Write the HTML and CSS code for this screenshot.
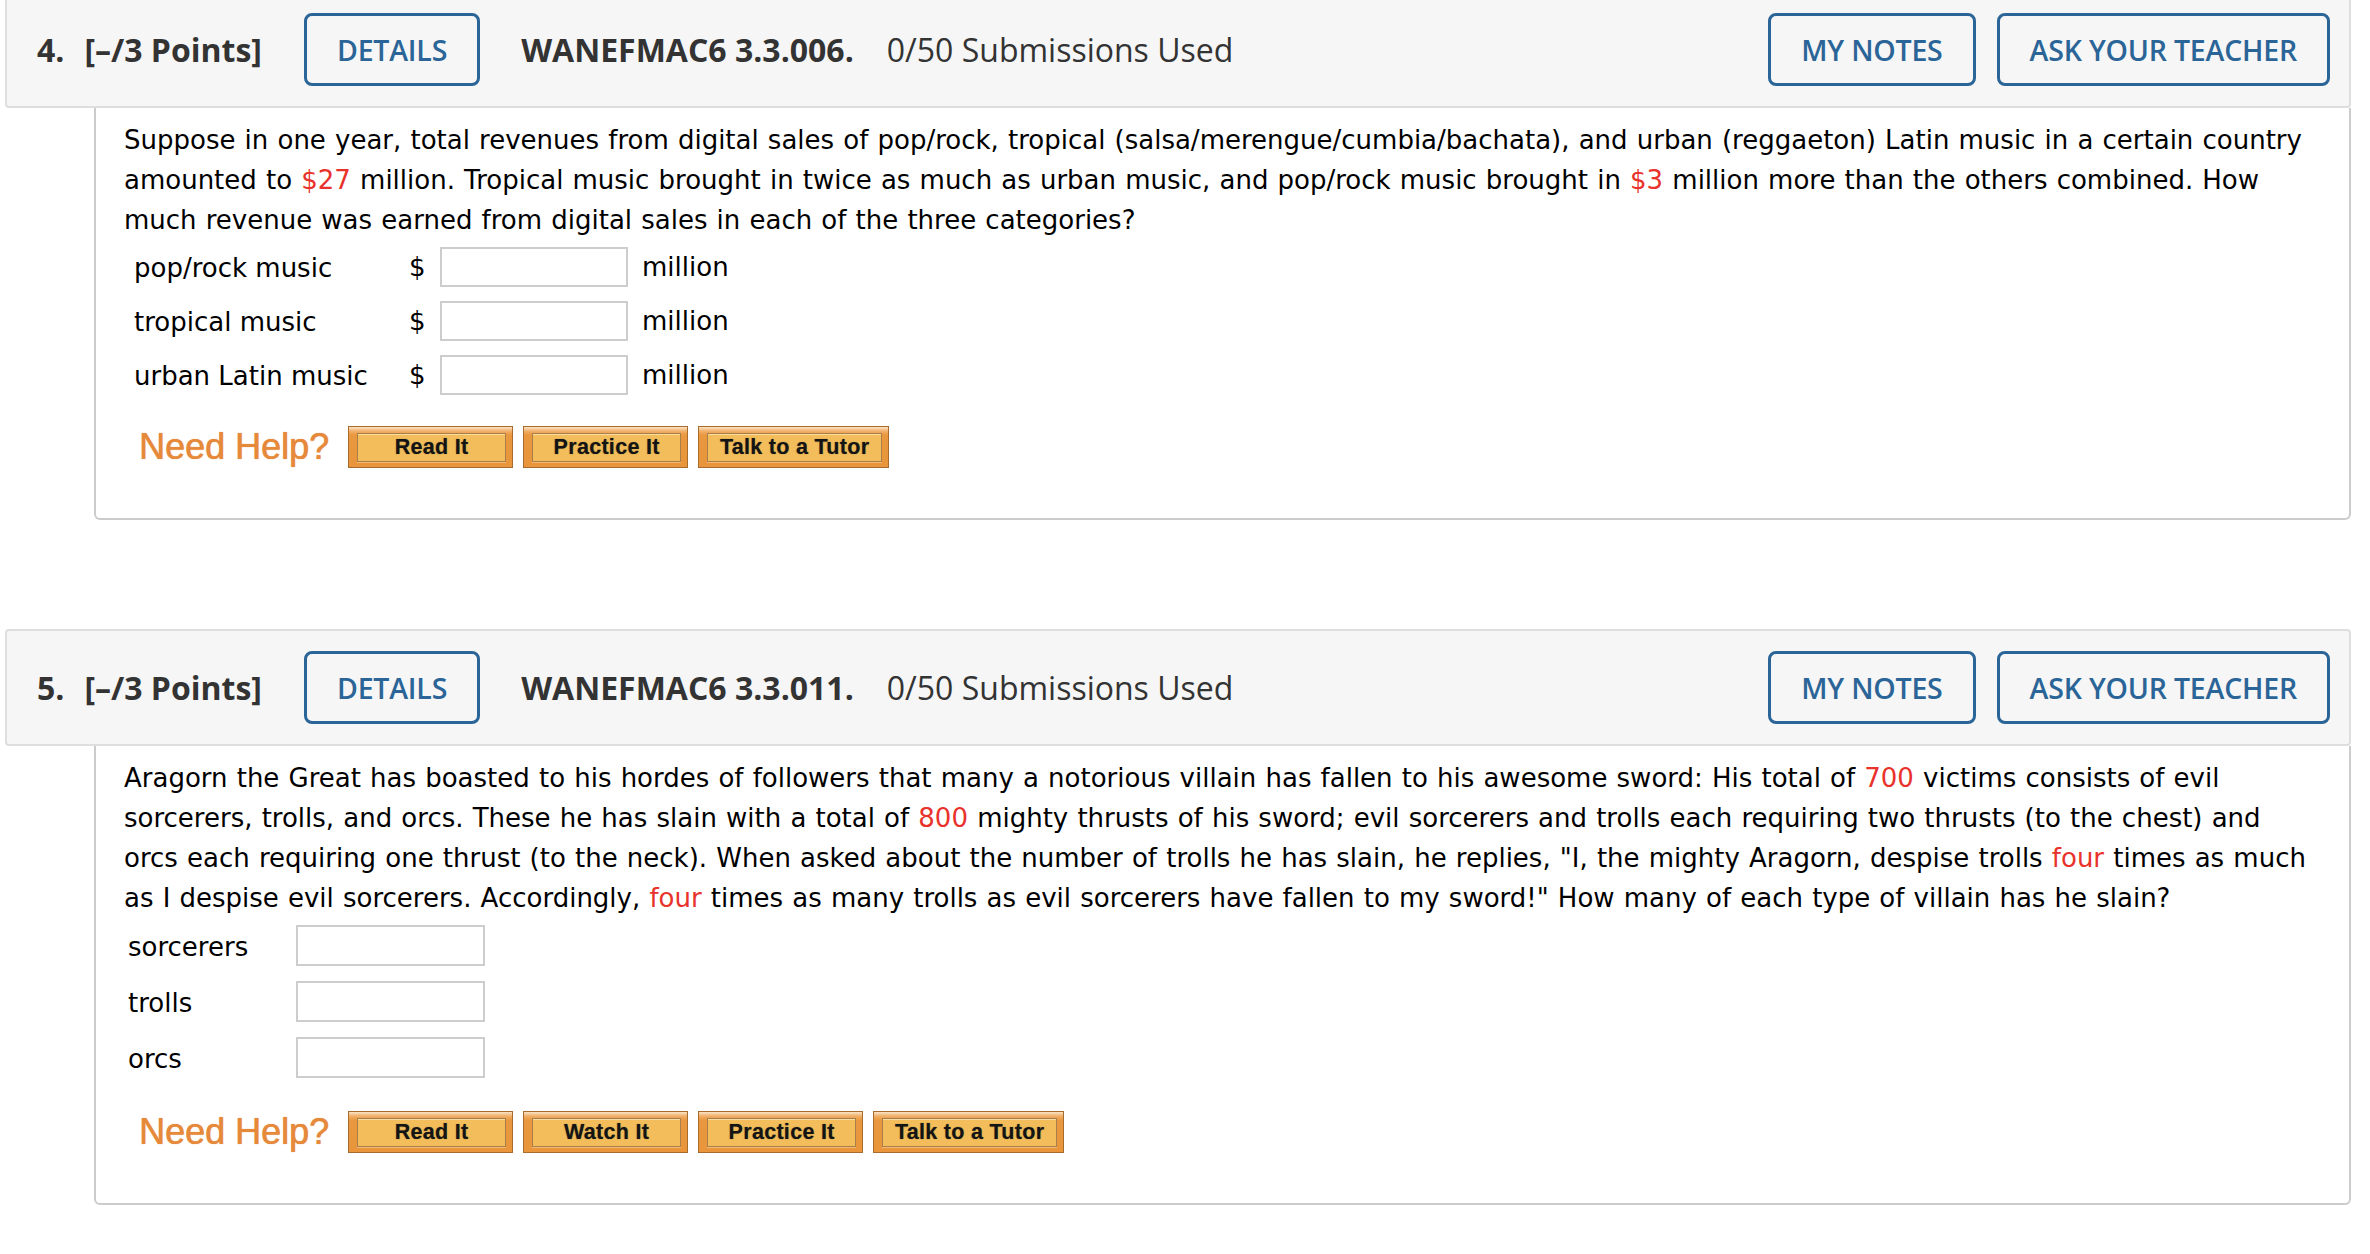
FILE: index.html
```html
<!DOCTYPE html>
<html lang="en">
<head>
<meta charset="utf-8">
<title>WebAssign questions</title>
<link rel="stylesheet" href="styles.css">
</head>
<body>
<main class="page">

  <article class="question first">
    <header class="q-header">
      <div class="q-left">
        <span class="q-num">4.</span>
        <span class="q-points">[–/3 Points]</span>
        <button class="btn-outline details">DETAILS</button>
        <span class="q-code">WANEFMAC6 3.3.006.</span>
        <span class="q-subs">0/50 Submissions Used</span>
      </div>
      <div class="q-right">
        <button class="btn-outline">MY NOTES</button>
        <button class="btn-outline">ASK YOUR TEACHER</button>
      </div>
    </header>
    <div class="q-body">
      <p class="q-text">Suppose in one year, total revenues from digital sales of pop/rock, tropical (salsa/merengue/cumbia/bachata), and urban (reggaeton) Latin music in a certain country amounted to <span class="val">$27</span> million. Tropical music brought in twice as much as urban music, and pop/rock music brought in <span class="val">$3</span> million more than the others combined. How much revenue was earned from digital sales in each of the three categories?</p>
      <div class="answers money">
        <span class="a-label">pop/rock music</span><span class="a-cur">$</span><input class="a-input" type="text"><span class="a-unit">million</span>
        <span class="a-label">tropical music</span><span class="a-cur">$</span><input class="a-input" type="text"><span class="a-unit">million</span>
        <span class="a-label">urban Latin music</span><span class="a-cur">$</span><input class="a-input" type="text"><span class="a-unit">million</span>
      </div>
      <div class="help">
        <span class="help-title">Need Help?</span>
        <button class="help-btn"><span class="help-inner">Read It</span></button>
        <button class="help-btn"><span class="help-inner">Practice It</span></button>
        <button class="help-btn wide"><span class="help-inner">Talk to a Tutor</span></button>
      </div>
    </div>
  </article>

  <article class="question second">
    <header class="q-header">
      <div class="q-left">
        <span class="q-num">5.</span>
        <span class="q-points">[–/3 Points]</span>
        <button class="btn-outline details">DETAILS</button>
        <span class="q-code">WANEFMAC6 3.3.011.</span>
        <span class="q-subs">0/50 Submissions Used</span>
      </div>
      <div class="q-right">
        <button class="btn-outline">MY NOTES</button>
        <button class="btn-outline">ASK YOUR TEACHER</button>
      </div>
    </header>
    <div class="q-body">
      <p class="q-text">Aragorn the Great has boasted to his hordes of followers that many a notorious villain has fallen to his awesome sword: His total of <span class="val">700</span> victims consists of evil sorcerers, trolls, and orcs. These he has slain with a total of <span class="val">800</span> mighty thrusts of his sword; evil sorcerers and trolls each requiring two thrusts (to the chest) and orcs each requiring one thrust (to the neck). When asked about the number of trolls he has slain, he replies, "I, the mighty Aragorn, despise trolls <span class="val">four</span> times as much as I despise evil sorcerers. Accordingly, <span class="val">four</span> times as many trolls as evil sorcerers have fallen to my sword!" How many of each type of villain has he slain?</p>
      <div class="answers plain">
        <span class="a-label">sorcerers</span><input class="a-input" type="text">
        <span class="a-label">trolls</span><input class="a-input" type="text">
        <span class="a-label">orcs</span><input class="a-input" type="text">
      </div>
      <div class="help">
        <span class="help-title">Need Help?</span>
        <button class="help-btn"><span class="help-inner">Read It</span></button>
        <button class="help-btn"><span class="help-inner">Watch It</span></button>
        <button class="help-btn"><span class="help-inner">Practice It</span></button>
        <button class="help-btn wide"><span class="help-inner">Talk to a Tutor</span></button>
      </div>
    </div>
  </article>

</main>
</body>
</html>
```

FILE: styles.css
```css
html, body {
  margin: 0;
  padding: 0;
  background: #ffffff;
}

.page {
  padding: 0 19px 0 5px;
}

.question.first {
  margin-top: -9px;
}

.question.second {
  margin-top: 109px;
}

/* ---------- header bar ---------- */
.q-header {
  box-sizing: border-box;
  height: 117px;
  display: flex;
  align-items: center;
  justify-content: space-between;
  background: #f6f6f6;
  border: 2px solid #dedede;
  border-radius: 4px;
  padding: 0 19px 0 30px;
  font-family: "Open Sans", "Liberation Sans", sans-serif;
  color: #333333;
}

.q-left,
.q-right {
  display: flex;
  align-items: center;
}

.q-num {
  font-size: 32px;
  font-weight: 700;
  margin-right: 20px;
}

.q-points {
  font-size: 32px;
  font-weight: 700;
  margin-right: 42px;
}

.q-code {
  font-size: 32px;
  font-weight: 700;
  margin-left: 41px;
  margin-right: 33px;
}

.q-subs {
  font-size: 32px;
  font-weight: 400;
}

.btn-outline {
  box-sizing: border-box;
  height: 73px;
  padding: 0 30px;
  background: transparent;
  border: 3px solid #2b6598;
  border-radius: 8px;
  color: #2b6598;
  font-family: "Open Sans", "Liberation Sans", sans-serif;
  font-size: 28.5px;
  font-weight: 600;
  letter-spacing: -0.2px;
  cursor: pointer;
}

.q-right .btn-outline + .btn-outline {
  margin-left: 21px;
}

/* ---------- body ---------- */
.q-body {
  margin-left: 89px;
  border: 2px solid #cccccc;
  border-top: none;
  border-radius: 0 0 6px 6px;
  padding: 12px 28px 50px 28px;
  font-family: "DejaVu Sans", Verdana, sans-serif;
  font-size: 26px;
  color: #000000;
}

.q-text {
  margin: 0;
  line-height: 40px;
  word-spacing: 0.9px;
}

.val {
  color: #e8322b;
}

/* ---------- answer grids ---------- */
.answers {
  display: grid;
  align-items: center;
  margin-top: 7px;
}

.answers.money {
  grid-template-columns: 275px 31px 188px auto;
  row-gap: 14px;
  margin-left: 10px;
}

.answers.plain {
  grid-template-columns: 168px 189px;
  row-gap: 15px;
  margin-left: 4px;
}

.a-label,
.a-cur,
.a-unit {
  line-height: 36px;
}

.a-label {
  position: relative;
  top: 1px;
}

.a-unit {
  padding-left: 14px;
}

.a-input {
  box-sizing: border-box;
  height: 40px;
  margin: 0;
  border: 2px solid #cdcdcd;
  background: #ffffff;
  font: inherit;
}

.answers.money .a-input {
  width: 188px;
}

.answers.plain .a-input {
  width: 189px;
  height: 41px;
}

/* ---------- need help ---------- */
.help {
  display: flex;
  align-items: center;
  margin-top: 31px;
}

.answers.plain + .help {
  margin-top: 33px;
}

.help-title {
  margin-left: 15px;
  margin-right: 19px;
  font-family: "Liberation Sans", Arial, sans-serif;
  font-size: 36px;
  color: #e6893b;
  text-shadow: 0 0 1px rgba(230, 137, 59, 0.9), 0.5px 0 0 rgba(230, 137, 59, 0.7);
}

.help-btn {
  box-sizing: border-box;
  width: 165px;
  height: 42px;
  margin: 0 10px 0 0;
  padding: 6px 6px 5px 8px;
  border: 1px solid #a86b2e;
  background: linear-gradient(to bottom, #fbe3c6 0px, #f1b06a 4px, #e9983f 8px, #e8953b 100%);
  cursor: pointer;
  display: flex;
}

.help-btn.wide {
  width: 191px;
}

.help-inner {
  flex: 1;
  display: flex;
  align-items: center;
  justify-content: center;
  border: 1px solid #a87f4a;
  box-shadow: inset 0 1px 0 rgba(255, 240, 200, 0.6), 0 1px 0 rgba(255, 220, 170, 0.5);
  background: #f2bd5a;
  font-family: "Liberation Sans", Arial, sans-serif;
  font-weight: 700;
  font-size: 21.5px;
  letter-spacing: 0.3px;
  color: #141414;
  text-shadow: 0 0 1px rgba(20, 20, 20, 0.5);
}
```
